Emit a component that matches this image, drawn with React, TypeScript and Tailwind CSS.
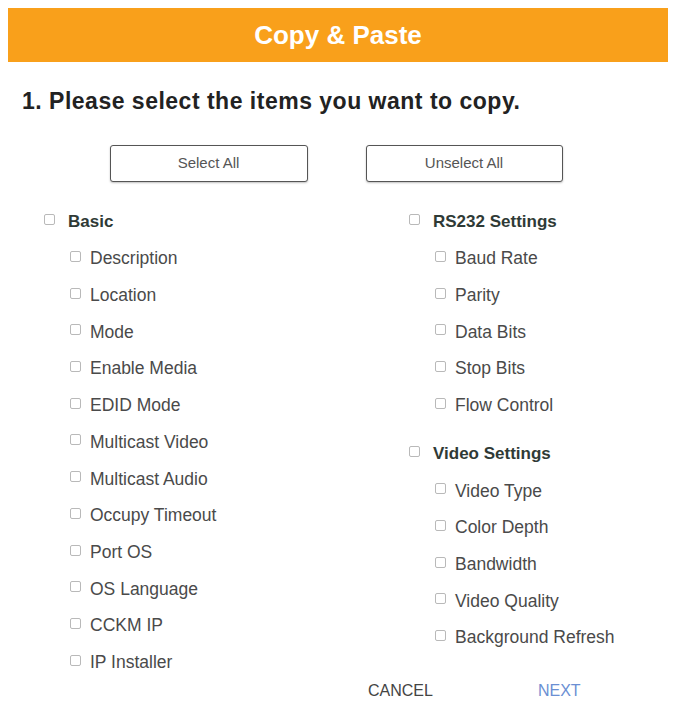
import React from "react";

const basicItems = [
  "Description",
  "Location",
  "Mode",
  "Enable Media",
  "EDID Mode",
  "Multicast Video",
  "Multicast Audio",
  "Occupy Timeout",
  "Port OS",
  "OS Language",
  "CCKM IP",
  "IP Installer",
];

const rs232Items = ["Baud Rate", "Parity", "Data Bits", "Stop Bits", "Flow Control"];

const videoItems = ["Video Type", "Color Depth", "Bandwidth", "Video Quality", "Background Refresh"];

function Box() {
  return (
    <span className="inline-block w-[11px] h-[11px] shrink-0 rounded-[2px] border border-[#b9b9b9] bg-white -translate-y-[2px]" />
  );
}

function Group({ title, items }: { title: string; items: string[] }) {
  return (
    <div className="flex flex-col">
      <div className="flex items-center h-[36.7px] gap-[13px]">
        <Box />
        <span className="text-[17px] font-bold text-[#2f3a36]">{title}</span>
      </div>
      {items.map((it) => (
        <div key={it} className="flex items-center h-[36.7px] gap-[9px] pl-[26px]">
          <Box />
          <span className="text-[17.5px] text-[#4a4a4a]">{it}</span>
        </div>
      ))}
    </div>
  );
}

export default function App() {
  return (
    <div
      className="w-[676px] h-[704px] bg-white overflow-hidden"
      style={{ fontFamily: '"Liberation Sans", Arial, sans-serif' }}
    >
      {/* 헤더 */}
      <div className="mx-[8px] mt-[8px] h-[54px] bg-[#f9a01b] flex items-center justify-center">
        <span className="text-[26px] font-bold text-white">Copy &amp; Paste</span>
      </div>

      <div className="pl-[22px] mt-[22px] text-[23px] font-bold text-[#222] tracking-[0.5px]">
        1. Please select the items you want to copy.
      </div>

      <div className="flex justify-center gap-[58px] mt-[26px] pr-[4px]">
        <button className="w-[198px] h-[37px] rounded-[3px] border border-[#555] shadow-[0_1px_2px_rgba(0,0,0,0.25)] text-[15px] text-[#555] bg-white">
          Select All
        </button>
        <button className="w-[197px] h-[37px] rounded-[3px] border border-[#555] shadow-[0_1px_2px_rgba(0,0,0,0.25)] text-[15px] text-[#555] bg-white">
          Unselect All
        </button>
      </div>

      <div className="flex mt-[22px] pl-[44px]">
        <div className="w-[365px]">
          <Group title="Basic" items={basicItems} />
        </div>
        <div className="flex flex-col gap-[12px]">
          <Group title="RS232 Settings" items={rs232Items} />
          <Group title="Video Settings" items={videoItems} />
        </div>
      </div>

      <div className="flex -mt-[1px] pl-[368px] gap-[105px] text-[16px]">
        <span className="text-[#444]">CANCEL</span>
        <span className="text-[#6b8fd3]">NEXT</span>
      </div>
    </div>
  );
}
